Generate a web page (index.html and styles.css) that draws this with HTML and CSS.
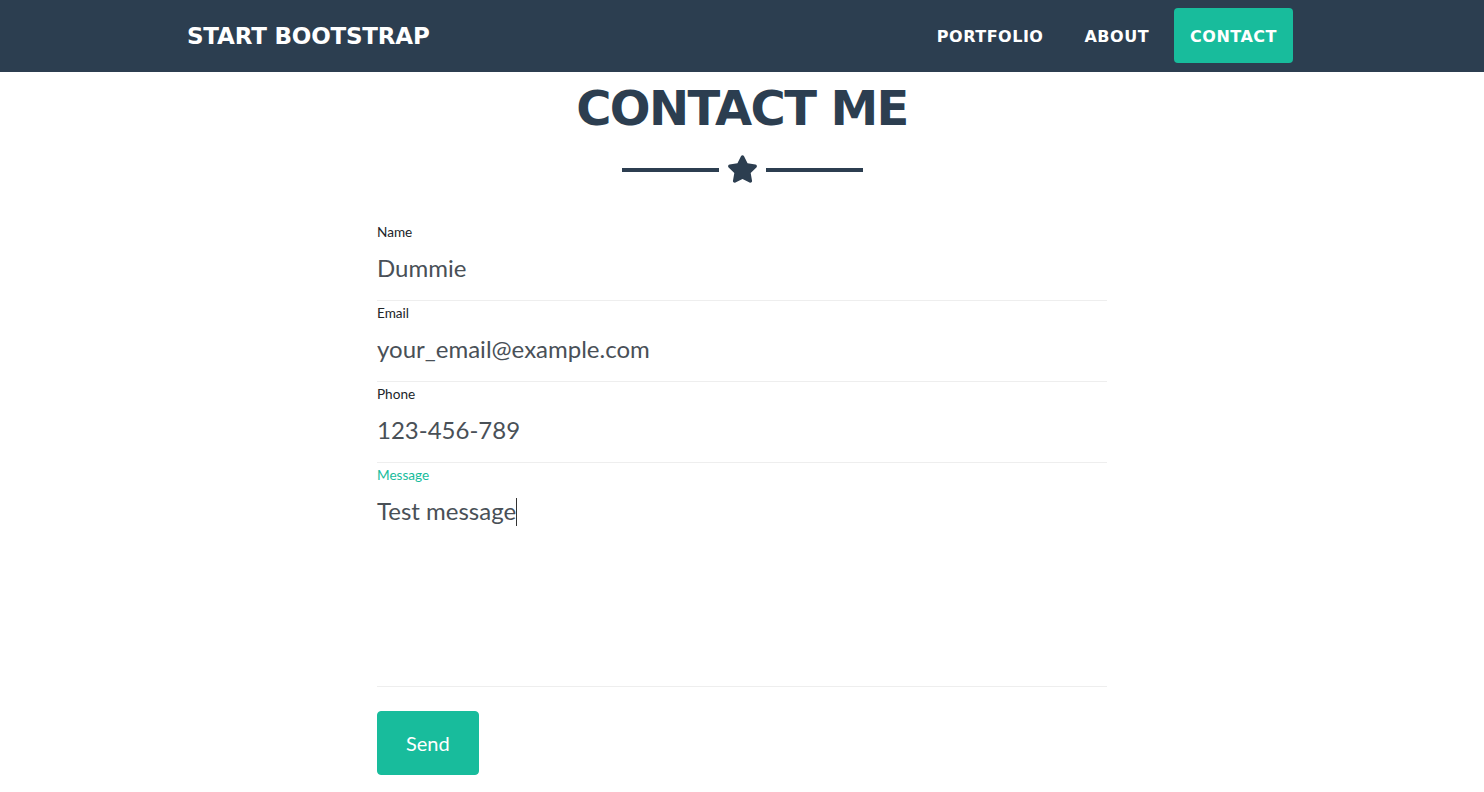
FILE: index.html
```html
<!DOCTYPE html>
<html lang="en">
<head>
<meta charset="utf-8">
<title>Contact Me</title>
<link rel="stylesheet" href="styles.css">
</head>
<body>
<nav class="navbar">
  <div class="container nav-inner">
    <a class="brand" href="#">START BOOTSTRAP</a>
    <ul class="nav-links">
      <li><a class="nav-link" href="#">PORTFOLIO</a></li>
      <li><a class="nav-link" href="#">ABOUT</a></li>
      <li><a class="nav-link active" href="#">CONTACT</a></li>
    </ul>
  </div>
</nav>
<section class="contact">
  <h2 class="heading">CONTACT ME</h2>
  <div class="divider">
    <span class="divider-line"></span>
    <svg class="star" viewBox="0 0 576 512" width="31" height="28" aria-hidden="true"><path fill="#2c3e50" d="M259.3 17.8L194 150.2 47.9 171.5c-26.2 3.8-36.7 36.1-17.7 54.6l105.7 103-25 145.5c-4.5 26.3 23.2 46 46.4 33.7L288 439.6l130.7 68.7c23.2 12.2 50.9-7.4 46.4-33.7l-25-145.5 105.7-103c19-18.5 8.5-50.8-17.7-54.6L382 150.2 316.7 17.8c-11.7-23.6-45.6-23.9-57.4 0z"/></svg>
    <span class="divider-line"></span>
  </div>
  <form class="form">
    <div class="group">
      <label class="label">Name</label>
      <div class="field">Dummie</div>
    </div>
    <div class="group">
      <label class="label">Email</label>
      <div class="field">your_email@example.com</div>
    </div>
    <div class="group">
      <label class="label">Phone</label>
      <div class="field">123-456-789</div>
    </div>
    <div class="group">
      <label class="label label-focus">Message</label>
      <div class="field textarea">Test message<span class="caret"></span></div>
    </div>
    <button class="btn-send" type="button">Send</button>
  </form>
</section>
</body>
</html>
```
FILE: styles.css
```css
* { box-sizing: border-box; }
html, body { margin: 0; padding: 0; }
body {
  font-family: "Lato", "Liberation Sans", sans-serif;
  background: #fff;
  color: #212529;
}
.container {
  width: 1110px;
  margin: 0 auto;
}
.navbar {
  background: #2c3e50;
  height: 72px;
}
.nav-inner {
  height: 72px;
  display: flex;
  align-items: center;
  justify-content: space-between;
}
.brand {
  font-family: "DejaVu Sans", sans-serif;
  font-weight: 700;
  font-size: 23px;
  letter-spacing: -0.2px;
  color: #fff;
  text-decoration: none;
}
.nav-links {
  list-style: none;
  margin: -1px 4px 0 0;
  padding: 0;
  display: flex;
  gap: 9px;
}
.nav-link {
  display: block;
  font-family: "DejaVu Sans", sans-serif;
  font-weight: 700;
  font-size: 16px;
  letter-spacing: 0.5px;
  color: #fff;
  text-decoration: none;
  padding: 0 16px;
  height: 55px;
  line-height: 58px;
  border-radius: 4px;
}
.nav-link.active {
  background: #18bc9c;
}
.contact {
  display: flex;
  flex-direction: column;
  align-items: center;
  padding-top: 8px;
}
.heading {
  margin: 0;
  font-family: "DejaVu Sans", sans-serif;
  font-weight: 700;
  font-size: 48px;
  line-height: 57px;
  letter-spacing: -1.6px;
  color: #2c3e50;
}
.divider {
  display: flex;
  align-items: center;
  gap: 8px;
  height: 30px;
  margin-top: 17px;
}
.divider-line {
  display: block;
  width: 97px;
  height: 4px;
  margin-top: 1px;
  background: #2c3e50;
}
.star { display: block; }
.form {
  width: 730px;
  margin-top: 36px;
}
.group {
  padding-top: 4px;
  border-bottom: 1px solid #eeeeee;
}
.label {
  display: block;
  font-size: 13.6px;
  line-height: 16px;
  color: #212529;
}
.label-focus { color: #18bc9c; }
.field {
  font-size: 24px;
  line-height: 34px;
  padding: 11px 0 15px;
  color: #495057;
  height: 60px;
}
.field.textarea {
  height: 203px;
}
.caret {
  display: inline-block;
  width: 1px;
  height: 28px;
  background: #333;
  vertical-align: -6px;
}
.btn-send {
  margin-top: 24px;
  font-family: "Lato", "Liberation Sans", sans-serif;
  font-size: 20px;
  line-height: 30px;
  padding: 16px 28px;
  background: #18bc9c;
  color: #fff;
  border: 1px solid #18bc9c;
  border-radius: 4px;
}
```
